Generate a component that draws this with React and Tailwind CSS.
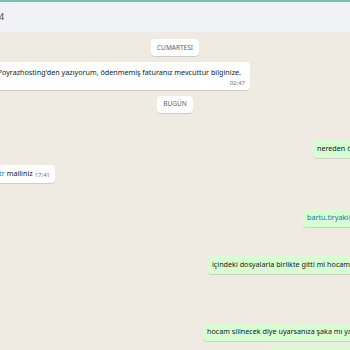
import React from "react";

const font = { fontFamily: '"Noto Sans", "Open Sans", sans-serif' };

function DayPill({ label, className }) {
  return (
    <div className={"flex justify-center " + className}>
      <div className="flex h-[17px] items-center rounded-[4px] bg-white px-[6px] text-[6.5px] uppercase text-[#54656f] shadow-[0_1px_0.5px_rgba(11,20,26,0.13)]">
        {label}
      </div>
    </div>
  );
}

function Outgoing({ children, left, className }) {
  return (
    <div className={"flex " + className}>
      <div
        className={
          "flex h-[18px] shrink-0 items-center whitespace-nowrap rounded-[4px] bg-[#d9fdd3] pl-[4px] pr-[40px] text-[7.2px] text-[#111b21] shadow-[0_1px_0.5px_rgba(11,20,26,0.13)] " +
          left
        }
      >
        {children}
      </div>
    </div>
  );
}

export default function App() {
  return (
    <div className="h-[350px] w-[350px] overflow-hidden bg-[#efeae2]" style={font}>
      <div className="h-[2px] bg-[#7fbcad]" />
      <div className="flex h-[30px] items-center overflow-hidden bg-[#f0f2f5]">
        <div className="-ml-[1px] text-[9px] text-[#3b4a54]">4</div>
      </div>

      <DayPill label="Cumartesi" className="mt-[7px]" />

      <div className="mt-[6px] flex w-[250px] justify-end">
        <div className="flex shrink-0 flex-col whitespace-nowrap rounded-[4px] bg-white pl-[5px] pr-[5px] pt-[5px] pb-[2px] text-[7.2px] text-[#111b21] shadow-[0_1px_0.5px_rgba(11,20,26,0.13)]">
          <span className="pr-[4px]">
            Merhaba, Poyrazhosting'den yazıyorum, ödenmemiş faturanız mevcuttur bilginize.
          </span>
          <span className="mt-[1px] self-end text-[6px] text-[#667781]">02:47</span>
        </div>
      </div>

      <DayPill label="Bugün" className="mt-[6px]" />

      <Outgoing left="ml-[313px]" className="mt-[27px]">
        nereden öğrendiniz
      </Outgoing>

      <div className="mt-[7px] flex w-[55px] justify-end">
        <div className="flex h-[18px] shrink-0 items-center whitespace-nowrap rounded-[4px] bg-white pl-[5px] pr-[5px] text-[7.2px] text-[#111b21] shadow-[0_1px_0.5px_rgba(11,20,26,0.13)]">
          <span className="text-[#027eb5]">bartu.tiryaki@poyraz.com.tr</span>
          <span className="ml-[2px]">mailiniz</span>
          <span className="ml-[2px] mt-[3px] text-[6px] text-[#667781]">17:41</span>
        </div>
      </div>

      <Outgoing left="ml-[303px]" className="mt-[26px]">
        <span className="text-[#027eb5]">bartu.tiryaki@poyraz.com.tr</span>
      </Outgoing>

      <Outgoing left="ml-[208px]" className="mt-[29px]">
        içindeki dosyalarla birlikte gitti mi hocam
      </Outgoing>

      <Outgoing left="ml-[203px]" className="mt-[49px]">
        hocam silinecek diye uyarsanıza şaka mı ya
      </Outgoing>

      <Outgoing left="ml-[269px]" className="mt-[5px]">
        bu ne ciddiyetsizlik böyle
      </Outgoing>
    </div>
  );
}
